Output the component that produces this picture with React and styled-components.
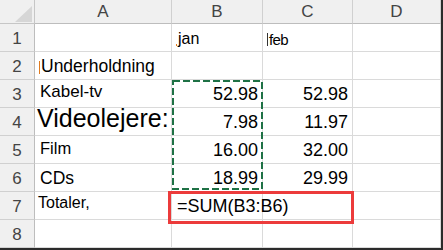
import React from "react";
import styled, { createGlobalStyle } from "styled-components";

const GlobalStyle = createGlobalStyle`
  body {
    margin: 0;
    background: #ffffff;
  }
`;

const COLS = ["A", "B", "C", "D"];

const rows = [
  [null, { t: "jan", s: 16, mark: "dot" }, { t: "feb", s: 15, mark: "bar", tight: true }, null],
  [{ t: "Underholdning", s: 17.5, mark: "caret" }, null, null, null],
  [{ t: "Kabel-tv", s: 17, pb: 7 }, { t: "52.98", s: 18, r: true }, { t: "52.98", s: 18, r: true }, null],
  [{ t: "Videolejere:", s: 25, pb: 4, pl: 2 }, { t: "7.98", s: 18, r: true }, { t: "11.97", s: 18, r: true }, null],
  [{ t: "Film", s: 16.5, pb: 7 }, { t: "16.00", s: 18, r: true }, { t: "32.00", s: 18, r: true }, null],
  [{ t: "CDs", s: 17.5 }, { t: "18.99", s: 18, r: true }, { t: "29.99", s: 18, r: true }, null],
  [{ t: "Totaler,", s: 16, pb: 8, pl: 3 }, { t: "=SUM(B3:B6)", s: 18 }, null, null],
  [null, null, null, null],
];

const Sheet = () => (
  <Frame>
    <GlobalStyle />
    <Grid>
      <Corner>
        <svg width="35" height="24" viewBox="0 0 35 24">
          <polygon points="15,22 32,22 32,6" fill="#d6d6d6" />
        </svg>
      </Corner>
      {COLS.map((c, i) => (
        <ColHead key={c} $col={i + 2}>
          {c}
        </ColHead>
      ))}
      {rows.map((row, ri) => (
        <React.Fragment key={ri}>
          <RowHead $row={ri + 2}>{ri + 1}</RowHead>
          {row.map((cell, ci) => (
            <Cell
              key={ci}
              $row={ri + 2}
              $col={ci + 2}
              $right={cell && cell.r}
              $pb={cell && cell.pb}
              $pl={cell && cell.pl}
            >
              {cell && cell.mark === "caret" && <Caret $color="#e07b1f" />}
              {cell && cell.mark === "bar" && <Caret $color="#333" />}
              {cell && cell.mark === "dot" && <Dot />}
              {cell && (
                <Value $size={cell.s} $tight={cell.tight}>
                  {cell.t}
                </Value>
              )}
            </Cell>
          ))}
        </React.Fragment>
      ))}
      <Marquee>
        <svg width="92" height="110" viewBox="0 0 92 110">
          <rect
            x="1"
            y="1"
            width="89"
            height="108"
            fill="none"
            stroke="#1e7145"
            strokeWidth="2"
            strokeDasharray="7 3"
          />
        </svg>
      </Marquee>
      <Selection />
    </Grid>
  </Frame>
);

const Frame = styled.div`
  width: 441px;
  height: 248px;
  border-right: 2px solid #2b2b2b;
  border-bottom: 2px solid #2b2b2b;
  overflow: hidden;
  font-family: "Liberation Sans", Arial, sans-serif;
`;

const Grid = styled.div`
  display: grid;
  grid-template-columns: 35px 137px 91px 90px 88px;
  grid-template-rows: 24px repeat(8, 28px);
`;

const Corner = styled.div`
  grid-column: 1;
  grid-row: 1;
  background: #f0f0f0;
  border-right: 1px solid #c6c6c6;
  border-bottom: 1px solid #c6c6c6;
  box-sizing: border-box;
  svg {
    display: block;
  }
`;

const ColHead = styled.div`
  grid-column: ${(p) => p.$col};
  grid-row: 1;
  background: #f0f0f0;
  border-right: 1px solid #d0d0d0;
  border-bottom: 1px solid #bdbdbd;
  box-sizing: border-box;
  display: flex;
  align-items: center;
  justify-content: center;
  font-size: 17px;
  color: #444444;
  padding-top: 1px;
`;

const RowHead = styled.div`
  grid-column: 1;
  grid-row: ${(p) => p.$row};
  background: #f0f0f0;
  border-right: 1px solid #bdbdbd;
  border-bottom: 1px solid #d0d0d0;
  box-sizing: border-box;
  display: flex;
  align-items: center;
  justify-content: center;
  font-size: 17px;
  color: #444444;
  padding-top: 2px;
`;

const Cell = styled.div`
  grid-column: ${(p) => p.$col};
  grid-row: ${(p) => p.$row};
  border-right: 1px solid #dadada;
  border-bottom: 1px solid #dadada;
  box-sizing: border-box;
  display: flex;
  align-items: flex-end;
  justify-content: ${(p) => (p.$right ? "flex-end" : "flex-start")};
  padding: 0 ${(p) => (p.$right ? 4 : 0)}px ${(p) => (p.$pb != null ? p.$pb : 4)}px
    ${(p) => (p.$pl != null ? p.$pl : 5)}px;
  color: #000000;
  white-space: nowrap;
  min-width: 0;
`;

const Value = styled.span`
  font-size: ${(p) => p.$size}px;
  line-height: 1;
  letter-spacing: ${(p) => (p.$tight ? "-0.6px" : "0")};
`;

const Caret = styled.span`
  width: 1px;
  height: 13px;
  background: ${(p) => p.$color};
  margin: 0 1px 1px -1px;
  flex-shrink: 0;
`;

const Dot = styled.span`
  width: 1px;
  height: 2px;
  background: #e07b1f;
  margin: 0 1px 1px -1px;
  flex-shrink: 0;
`;

const Marquee = styled.div`
  grid-column: 3;
  grid-row: 4 / 8;
  margin: 0 -1px -2px 0;
  pointer-events: none;
  z-index: 1;
  svg {
    display: block;
  }
`;

const Selection = styled.div`
  grid-column: 3 / 5;
  grid-row: 8;
  margin: -1px -1px -4px -4px;
  border: 3px solid #ec3b3b;
  pointer-events: none;
  z-index: 1;
`;

export default Sheet;
